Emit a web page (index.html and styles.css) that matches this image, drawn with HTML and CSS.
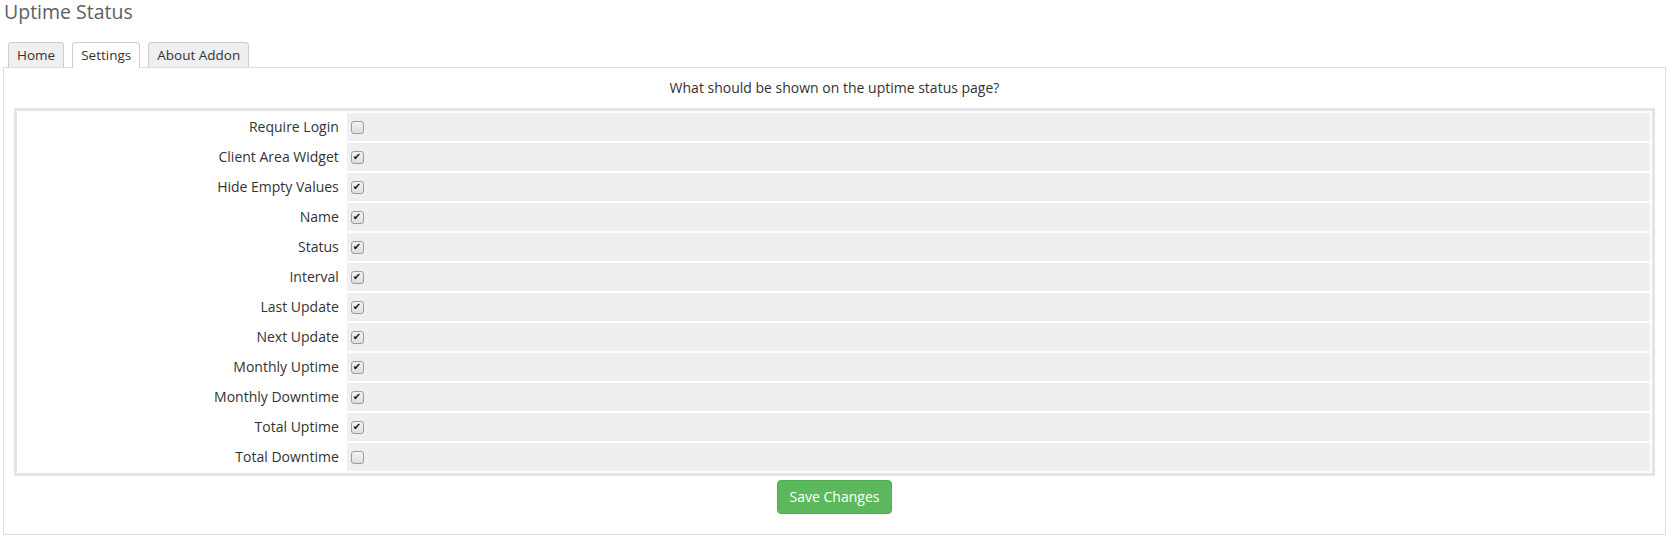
FILE: index.html
```html
<!DOCTYPE html>
<html lang="en">
<head>
  <meta charset="UTF-8">
  <title>Uptime Status</title>
  <link rel="stylesheet" href="styles.css">
</head>
<body>
  <div class="page">
    <h1>Uptime Status</h1>
    <ul class="tabs">
      <li class="tab">Home</li>
      <li class="tab active">Settings</li>
      <li class="tab">About Addon</li>
    </ul>
    <div class="tab-box">
      <p class="intro">What should be shown on the uptime status page?</p>
      <table class="form">
        <tr><td class="fieldlabel">Require Login</td><td class="fieldarea"><input type="checkbox"></td></tr>
        <tr><td class="fieldlabel">Client Area Widget</td><td class="fieldarea"><input type="checkbox" checked></td></tr>
        <tr><td class="fieldlabel">Hide Empty Values</td><td class="fieldarea"><input type="checkbox" checked></td></tr>
        <tr><td class="fieldlabel">Name</td><td class="fieldarea"><input type="checkbox" checked></td></tr>
        <tr><td class="fieldlabel">Status</td><td class="fieldarea"><input type="checkbox" checked></td></tr>
        <tr><td class="fieldlabel">Interval</td><td class="fieldarea"><input type="checkbox" checked></td></tr>
        <tr><td class="fieldlabel">Last Update</td><td class="fieldarea"><input type="checkbox" checked></td></tr>
        <tr><td class="fieldlabel">Next Update</td><td class="fieldarea"><input type="checkbox" checked></td></tr>
        <tr><td class="fieldlabel">Monthly Uptime</td><td class="fieldarea"><input type="checkbox" checked></td></tr>
        <tr><td class="fieldlabel">Monthly Downtime</td><td class="fieldarea"><input type="checkbox" checked></td></tr>
        <tr><td class="fieldlabel">Total Uptime</td><td class="fieldarea"><input type="checkbox" checked></td></tr>
        <tr><td class="fieldlabel">Total Downtime</td><td class="fieldarea"><input type="checkbox"></td></tr>
      </table>
      <div class="actions">
        <button class="btn-save">Save Changes</button>
      </div>
    </div>
  </div>
</body>
</html>
```

FILE: styles.css
```css
body {
  margin: 0;
  font-family: "Open Sans", Arial, sans-serif;
  font-size: 14px;
  color: #333;
  background: #fff;
}
.page {
  padding: 0 7px 0 3px;
}
h1 {
  margin: 0;
  padding-left: 1px;
  font-size: 19.5px;
  font-weight: normal;
  line-height: 24px;
  color: #5e5e5e;
}
.tabs {
  list-style: none;
  margin: 17px 0 0 5px;
  padding: 0;
  display: flex;
  gap: 8px;
}
.tab {
  height: 24px;
  line-height: 24px;
  padding: 0 8px;
  font-size: 13.5px;
  background: #efefef;
  border: 1px solid #ccc;
  border-bottom: none;
  border-radius: 4px 4px 0 0;
  position: relative;
  top: 1px;
}
.tab.active {
  background: #fff;
  height: 25px;
}
.tab-box {
  border: 1px solid #ddd;
  padding: 10px 10px 20px 10px;
}
.intro {
  margin: 0 0 10px;
  line-height: 20px;
  text-align: center;
}
.form {
  width: 100%;
  border: 3px solid #e1e5e8;
  border-spacing: 2px;
  background: #fff;
  font-size: 14px;
}
.form td {
  height: 28px;
  padding: 0 5px;
  vertical-align: middle;
  line-height: 18px;
}
.fieldlabel {
  width: 20%;
  text-align: right;
  padding-right: 6px !important;
}
.fieldarea {
  background: #efefef;
}
.fieldarea input {
  appearance: none;
  -webkit-appearance: none;
  width: 13px;
  height: 13px;
  margin: 0 0 0 -1px;
  display: block;
  border: 1px solid #9c9c9c;
  border-radius: 3px;
  background: linear-gradient(#f4f4f4, #dedede);
  position: relative;
}
.fieldarea input:checked::after {
  content: "\2714";
  position: absolute;
  left: 1px;
  top: -2px;
  font-family: "DejaVu Sans", sans-serif;
  font-size: 10px;
  line-height: 14px;
  color: #111;
}
.actions {
  text-align: center;
  margin-top: 4px;
}
.btn-save {
  font-family: "Open Sans", Arial, sans-serif;
  font-size: 14px;
  line-height: 20px;
  padding: 6px 12px;
  color: #fff;
  background: #5cb85c;
  border: 1px solid #4cae4c;
  border-radius: 4px;
  cursor: pointer;
}
```
